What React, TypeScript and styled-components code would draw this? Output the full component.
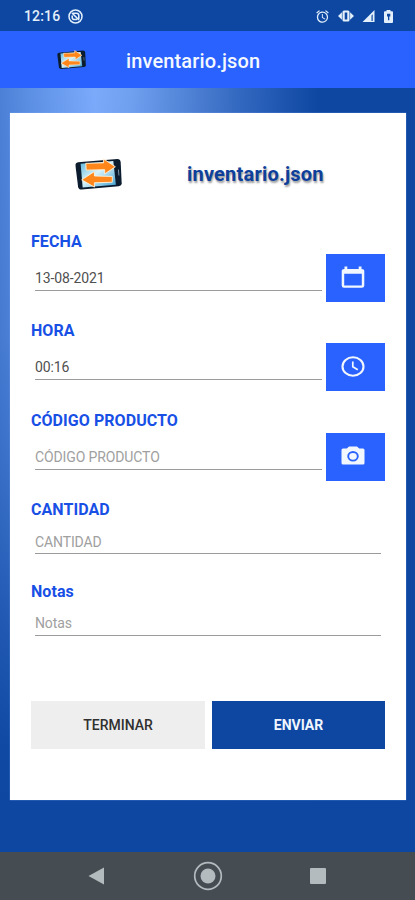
import React from 'react';
import styled, { createGlobalStyle } from 'styled-components';
import { MdAlarm } from 'react-icons/md';

const GlobalStyle = createGlobalStyle`
  * { box-sizing: border-box; }
  body { margin: 0; font-family: Roboto, sans-serif; }
  button, input { font-family: inherit; border: 0; padding: 0; margin: 0; border-radius: 0; }
  svg { display: block; flex: none; }
`;

const Screen = styled.div`
  width: 415px;
  height: 900px;
  display: flex;
  flex-direction: column;
  overflow: hidden;
`;

const StatusBar = styled.header`
  height: 31px;
  flex: none;
  display: flex;
  align-items: center;
  padding: 1px 22px 0 24px;
  background: #0d47a1;
  color: #e3f0fb;
`;

const Clock = styled.span`
  font-size: 14px;
  font-weight: 500;
  letter-spacing: 0.15px;
  width: 44px;
`;

const StatusIcons = styled.div`
  margin-left: auto;
  display: flex;
  align-items: center;
`;

const Gap = styled.span<{ $w: number }>`
  width: ${(p) => p.$w}px;
`;

const AppBar = styled.div`
  height: 57px;
  flex: none;
  display: flex;
  align-items: center;
  padding: 1px 0 0 57px;
  background: #2962ff;
`;

const AppTitle = styled.h1`
  margin: 1px 0 0 40px;
  font-size: 20px;
  font-weight: 500;
  letter-spacing: 0.14px;
  color: #f4f8ff;
`;

const Backdrop = styled.main`
  flex: 1;
  padding: 25px 9px 0 10px;
  background:
    linear-gradient(180deg, transparent 0, rgba(13, 71, 161, 0.1) 250px, rgba(13, 71, 161, 0.3) 370px, rgba(13, 71, 161, 0.65) 520px, rgba(13, 71, 161, 0.97) 660px, #0d47a1 720px),
    linear-gradient(90deg, #4c80d7 0, #5c90e4 30px, #7baafb 95px, #6f9fef 132px, #4f82d5 190px, #3267bf 242px, #0d47a1 318px);
`;

const Card = styled.form`
  height: 687px;
  padding: 0 21px;
  background: #fff;
  box-shadow: 0 0 1px #8eb8f5;
`;

const CardHeader = styled.div`
  height: 116px;
  padding: 6px 0 0 44px;
  display: flex;
  align-items: center;
`;

const CardTitle = styled.h2`
  margin: 0 0 0 65px;
  font-size: 20px;
  font-weight: 700;
  letter-spacing: 0.2px;
  color: #0d3f9b;
  text-shadow: 1px 1.5px 2px rgba(0, 0, 0, 0.4);
`;

const Field = styled.div<{ $height: number }>`
  height: ${(p) => p.$height}px;
`;

const Label = styled.label`
  display: block;
  height: 25px;
  line-height: 25px;
  font-size: 16px;
  font-weight: 700;
  letter-spacing: 0.06px;
  color: #1850e6;
`;

const FieldRow = styled.div<{ $action: boolean }>`
  display: flex;
  align-items: flex-start;
  gap: 4px;
  padding: ${(p) => (p.$action ? '0' : '0 4px 0 0')};
`;

const Input = styled.input<{ $tall: boolean }>`
  flex: 1;
  min-width: 0;
  margin-left: 4px;
  height: ${(p) => (p.$tall ? 37 : 32)}px;
  padding-top: ${(p) => (p.$tall ? 12 : 8)}px;
  border-bottom: 1px solid #9b9b9b;
  background: transparent;
  font-size: 14px;
  letter-spacing: -0.12px;
  color: #505050;
  outline: 0;
  &::placeholder {
    color: #a0a0a0;
    opacity: 1;
  }
`;

const IconButton = styled.button`
  width: 59px;
  height: 48px;
  display: flex;
  align-items: center;
  justify-content: center;
  padding: 0 5px 0 0;
  background: #2962ff;
  color: #f2f7ff;
`;

const Actions = styled.div`
  display: grid;
  grid-template-columns: 174px 173px;
  gap: 7px;
  margin-top: 40px;
`;

const ActionButton = styled.button<{ $primary?: boolean }>`
  height: 48px;
  padding-top: 1px;
  font-size: 14px;
  font-weight: ${(p) => (p.$primary ? 700 : 500)};
  letter-spacing: 0;
  background: ${(p) => (p.$primary ? '#0d47a1' : '#eee')};
  color: ${(p) => (p.$primary ? '#f0f6ff' : '#303030')};
`;

const NavBar = styled.nav`
  height: 48px;
  flex: none;
  display: flex;
  align-items: center;
  justify-content: space-between;
  padding: 0 89px 0 88px;
  background: #454d52;
`;

const TransferLogo = ({ width, height }: { width: number; height: number }) => (
  <svg width={width} height={height} viewBox="0 0 46 34" preserveAspectRatio="none">
    <defs>
      <linearGradient id="glass" x1="0" y1="0" x2="1" y2="1">
        <stop offset="0" stopColor="#5cb5dc" />
        <stop offset="0.45" stopColor="#d8f3fa" />
        <stop offset="1" stopColor="#3b9ed0" />
      </linearGradient>
    </defs>
    <path d="M3 4.500 41.500 1q2.800 0 3.200 3l1 22q0 2.500-3 3L6.500 32.500q-3 0-3.500-3L.5 8q-.2-3 2.500-3.500Z" fill="#0b1c2e" />
    <path d="M5.500 6 37.500 3.200l2.500 24.300-32.500 3Z" fill="url(#glass)" />
    <path d="m42.500 12 .5 6" stroke="#7890a0" strokeWidth="1" />
    <path d="M10.500 5.500 28 5V1l11.500 8L29 16.500v-4.500l-18 .500Z" fill="#ff861b" stroke="#fff3d9" strokeWidth="0.900" />
    <path d="M36.500 19 19 18.500V14L6.500 22.500 19 30v-4.500l17.500-.5Z" fill="#ff861b" stroke="#fff3d9" strokeWidth="0.900" />
  </svg>
);

const DataSaverIcon = () => (
  <svg width="15" height="15" viewBox="0 0 15 15" fill="none" stroke="currentColor">
    <circle cx="7.500" cy="7.500" r="6.500" strokeWidth="1.500" />
    <path d="M4.300 4.200h4.200a2.300 2.300 0 0 1 2.300 2.300V10M4.200 6.500v1.700a2.300 2.300 0 0 0 2.300 2.300H9M4 4l7 7" strokeWidth="1.600" />
  </svg>
);

const VibrateIcon = () => (
  <svg width="16" height="12" viewBox="0 0 16 12" fill="currentColor">
    <path fillRule="evenodd" d="M6 .500h4q1.500 0 1.500 1.500v8q0 1.500-1.500 1.500H6q-1.500 0-1.500-1.500V2Q4.500.5 6 .5ZM6.700 2.600v6.800h2.600V2.600Z" />
    <path d="M3.900 2.200v7.600L0 6ZM12.100 2.200v7.600L16 6Z" />
  </svg>
);

const SignalIcon = () => (
  <svg width="13" height="12" viewBox="0 0 13 12" fill="currentColor">
    <path fillRule="evenodd" d="M12.500 0v12H.5ZM9.500 5.500V11h1.200V4.300Z" />
  </svg>
);

const BatteryIcon = () => (
  <svg width="9" height="13" viewBox="0 0 9 13" fill="currentColor">
    <path fillRule="evenodd" d="M2.500 0h4v1.200H8q1 0 1 1V12q0 1-1 1H1q-1 0-1-1V2.200q0-1 1-1h1.500ZM3 3.800v2.700h1v3.700h1.300V6.500h1V3.800Z" />
  </svg>
);

const CalendarIcon = () => (
  <svg width="24" height="24" viewBox="0 0 24 24" fill="currentColor">
    <path fillRule="evenodd" d="M3.500.500h2.800V3h11.400V.500h2.800V3q2.800 0 2.800 2v14.500q0 2.300-2.500 2.300H3Q.7 21.800.7 19.500V5q0-2 2.800-2ZM3.200 7.800v11.700h17.600V7.800Z" />
  </svg>
);

const TimeIcon = () => (
  <svg width="24" height="22" viewBox="0 0 24 22" fill="none" stroke="currentColor">
    <ellipse cx="12" cy="10.500" rx="10.500" ry="9.300" strokeWidth="2.100" />
    <path d="M11.800 5.500v5.300l5 2.900" strokeWidth="1.700" />
  </svg>
);

const CameraIcon = () => (
  <svg width="24" height="21" viewBox="0 0 24 21">
    <path d="M8 .500h8l2.200 2H22q1.500 0 1.500 1.600V17q0 1.500-1.500 1.500H2Q.5 18.500.5 17V4.100q0-1.600 1.500-1.600h3.800Z" fill="currentColor" />
    <ellipse cx="12" cy="10.300" rx="4.800" ry="4.300" fill="none" stroke="#2962ff" strokeWidth="1.900" />
  </svg>
);

const BackIcon = () => (
  <svg width="17" height="18" viewBox="0 0 17 18">
    <path d="M16 .500v17L.5 9Z" fill="#b3bbbf" />
  </svg>
);

const HomeIcon = () => (
  <svg width="30" height="30" viewBox="0 0 30 30">
    <circle cx="15" cy="15" r="13.300" fill="none" stroke="#b3bbbf" strokeWidth="1.700" />
    <circle cx="15" cy="15" r="7.500" fill="#b3bbbf" />
  </svg>
);

const RecentsIcon = () => (
  <svg width="16" height="16" viewBox="0 0 16 16">
    <rect width="16" height="16" rx="1" fill="#b3bbbf" />
  </svg>
);

interface FieldSpec {
  id: string;
  label: string;
  height: number;
  value?: string;
  placeholder?: string;
  icon?: React.ReactNode;
}

const fields: FieldSpec[] = [
  { id: 'fecha', label: 'FECHA', height: 89.4, value: '13-08-2021', icon: <CalendarIcon /> },
  { id: 'hora', label: 'HORA', height: 89.6, value: '00:16', icon: <TimeIcon /> },
  { id: 'codigo', label: 'CÓDIGO PRODUCTO', height: 89.4, placeholder: 'CÓDIGO PRODUCTO', icon: <CameraIcon /> },
  { id: 'cantidad', label: 'CANTIDAD', height: 81.6, placeholder: 'CANTIDAD' },
  { id: 'notas', label: 'Notas', height: 82, placeholder: 'Notas' },
];

export default function App() {
  return (
    <Screen>
      <GlobalStyle />
      <StatusBar>
        <Clock>12:16</Clock>
        <DataSaverIcon />
        <StatusIcons>
          <MdAlarm size={15} />
          <Gap $w={8} />
          <VibrateIcon />
          <Gap $w={8} />
          <SignalIcon />
          <Gap $w={9} />
          <BatteryIcon />
        </StatusIcons>
      </StatusBar>
      <AppBar>
        <TransferLogo width={29} height={20} />
        <AppTitle>inventario.json</AppTitle>
      </AppBar>
      <Backdrop>
        <Card>
          <CardHeader>
            <TransferLogo width={47} height={33} />
            <CardTitle>inventario.json</CardTitle>
          </CardHeader>
          {fields.map((f) => (
            <Field key={f.id} $height={f.height}>
              <Label htmlFor={f.id}>{f.label}</Label>
              <FieldRow $action={!!f.icon}>
                <Input id={f.id} $tall={!!f.icon} defaultValue={f.value} placeholder={f.placeholder} />
                {f.icon && <IconButton type="button">{f.icon}</IconButton>}
              </FieldRow>
            </Field>
          ))}
          <Actions>
            <ActionButton type="button">TERMINAR</ActionButton>
            <ActionButton type="button" $primary>ENVIAR</ActionButton>
          </Actions>
        </Card>
      </Backdrop>
      <NavBar>
        <BackIcon />
        <HomeIcon />
        <RecentsIcon />
      </NavBar>
    </Screen>
  );
}
